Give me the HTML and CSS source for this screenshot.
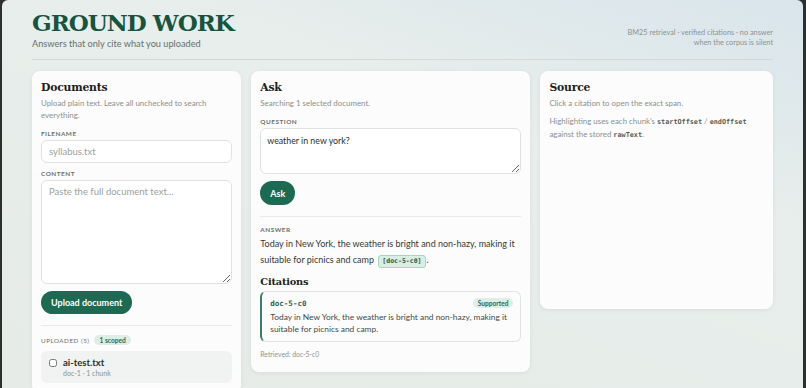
FILE: index.html
```html
<!DOCTYPE html>
<html lang="en">

<head>
    <meta charset="UTF-8">
    <meta name="viewport" content="width=device-width, initial-scale=1.0">
    <title>Ground Work</title>
    <link rel="stylesheet" href="styles.css">
</head>

<body>
    <div class="frame">
        <header class="masthead">
            <div>
                <h1>GROUND WORK</h1>
                <p class="tagline">Answers that only cite what you uploaded</p>
            </div>
            <p class="meta">BM25 retrieval · verified citations · no answer<br>when the corpus is silent</p>
        </header>

        <main class="columns">
            <section class="card">
                <h2>Documents</h2>
                <p class="hint">Upload plain text. Leave all unchecked to search everything.</p>

                <label class="field-label" for="txtName">Filename</label>
                <input type="text" id="txtName" class="field" placeholder="syllabus.txt">

                <label class="field-label" for="txtContent">Content</label>
                <textarea id="txtContent" class="field area-content" placeholder="Paste the full document text..."></textarea>

                <button class="btn">Upload document</button>

                <div class="rule"></div>

                <div class="list-head">
                    <span class="field-label inline">Uploaded (5)</span>
                    <span class="pill">1 scoped</span>
                </div>

                <div class="doc-item">
                    <input type="checkbox" class="doc-check">
                    <div>
                        <div class="doc-name">ai-test.txt</div>
                        <div class="doc-meta">doc-1 · 1 chunk</div>
                    </div>
                </div>
            </section>

            <section class="card card-ask">
                <h2>Ask</h2>
                <p class="hint">Searching 1 selected document.</p>

                <label class="field-label" for="txtQuestion">Question</label>
                <textarea id="txtQuestion" class="field area-question">weather in new york?</textarea>

                <button class="btn btn-small">Ask</button>

                <div class="rule"></div>

                <div class="field-label">Answer</div>
                <p class="answer">Today in New York, the weather is bright and non-hazy, making it suitable for picnics and camp <span class="cite-chip">[doc-5-c0]</span>.</p>

                <h3>Citations</h3>
                <div class="citation">
                    <div class="citation-head">
                        <span class="citation-id">doc-5-c0</span>
                        <span class="pill">Supported</span>
                    </div>
                    <p class="citation-text">Today in New York, the weather is bright and non-hazy, making it suitable for picnics and camp.</p>
                </div>
                <p class="retrieved">Retrieved: doc-5-c0</p>
            </section>

            <section class="card card-source">
                <h2>Source</h2>
                <p class="hint">Click a citation to open the exact span.</p>
                <p class="hint">Highlighting uses each chunk's <code>startOffset</code> / <code>endOffset</code> against the stored <code>rawText</code>.</p>
            </section>
        </main>
    </div>
</body>

</html>
```

FILE: styles.css
```css
html,
body {
    height: 100%;
}

body {
    margin: 0;
    font-family: 'Lato', sans-serif;
    color: #2a2f2d;
    background: #2c2f2e;
    overflow: hidden;
}

.frame {
    height: 100%;
    box-sizing: border-box;
    margin: 0 3px 0 2px;
    padding: 0 30px;
    border-radius: 6px 6px 0 0;
    background: linear-gradient(200deg, #d9e5ec 0%, #e8eeeb 35%, #e6ebe8 100%);
}

.masthead {
    display: flex;
    justify-content: space-between;
    align-items: flex-end;
    padding: 9px 0 10px;
    border-bottom: 1px solid #d3dad6;
}

h1 {
    margin: 0;
    font-family: 'DejaVu Serif', serif;
    font-weight: 700;
    font-size: 23px;
    letter-spacing: -1px;
    line-height: 28px;
    color: #17543d;
}

.tagline {
    margin: 1px 0 0;
    font-size: 9.2px;
    color: #66706b;
}

.meta {
    margin: 0 0 1px;
    text-align: right;
    font-size: 7.3px;
    line-height: 10px;
    color: #8b938f;
}

.columns {
    display: grid;
    grid-template-columns: 0.9fr 1.2fr 1fr;
    gap: 10px;
    align-items: start;
    margin-top: 11px;
}

.card {
    background: #fcfcfc;
    border-radius: 8px;
    padding: 8px 9px 10px;
    box-shadow: 0 1px 4px rgba(40, 60, 50, 0.08);
}

.card-ask {
    padding-bottom: 14px;
}

.card-source {
    min-height: 220px;
}

h2 {
    margin: 0;
    font-family: 'DejaVu Serif', serif;
    font-weight: 700;
    font-size: 10.8px;
    letter-spacing: -0.2px;
    line-height: 18px;
    color: #1d2220;
}

h3 {
    margin: 8px 0 4px;
    font-family: 'DejaVu Serif', serif;
    font-weight: 700;
    font-size: 9.8px;
    letter-spacing: -0.2px;
    color: #1d2220;
}

.hint {
    margin: 0;
    font-size: 7.9px;
    line-height: 12px;
    color: #8a918d;
}

.hint + .hint {
    margin-top: 6px;
}

code {
    font-family: 'DejaVu Sans Mono', monospace;
    font-size: 6.8px;
    font-weight: 700;
    color: #555c58;
}

.field-label {
    display: block;
    margin: 9px 0 3px;
    font-size: 6.4px;
    font-weight: 700;
    letter-spacing: 0.5px;
    text-transform: uppercase;
    color: #6a716d;
}

.field + .field-label {
    margin-top: 7px;
}

.rule + .field-label {
    margin-top: 9px;
}

.field-label.inline {
    display: inline;
    margin: 0;
    font-weight: 400;
    font-size: 6.3px;
}

.field {
    display: block;
    width: 100%;
    box-sizing: border-box;
    border: 1px solid #dde3df;
    border-radius: 6px;
    background: #ffffff;
    font-family: 'Lato', sans-serif;
    font-size: 9.5px;
    color: #2a2f2d;
    padding: 5px 7px;
    outline: none;
}

input.field {
    height: 23px;
}

.field::placeholder {
    color: #9aa19d;
}

.area-content {
    height: 104px;
    resize: vertical;
}

.area-question {
    height: 46px;
    font-size: 8.8px;
    padding: 6px 6px;
}

.btn {
    display: block;
    margin-top: 7px;
    height: 23px;
    padding: 0 10px;
    border: none;
    border-radius: 12px;
    background: #1b6a51;
    color: #ffffff;
    font-family: 'Lato', sans-serif;
    font-size: 9px;
    font-weight: 700;
    cursor: pointer;
}

.btn-small {
    padding: 0 10px;
    height: 24px;
}

.rule {
    height: 1px;
    background: #e8ebe9;
    margin: 11px 0 0;
}

.list-head {
    display: flex;
    align-items: center;
    gap: 5px;
    margin-top: 9px;
}

.pill {
    display: inline-block;
    padding: 1px 5px;
    border-radius: 8px;
    background: #dcefe6;
    color: #2b6a52;
    font-size: 6.6px;
    font-weight: 700;
}

.doc-item {
    display: flex;
    align-items: flex-start;
    gap: 6px;
    margin-top: 6px;
    padding: 6px 9px 6px 8px;
    border-radius: 6px;
    background: #f0f3f1;
}

.doc-check {
    margin: 2px 0 0;
    width: 8px;
    height: 8px;
}

.doc-name {
    font-size: 9.5px;
    font-weight: 700;
    color: #2b302e;
}

.doc-meta {
    font-size: 7px;
    color: #8c938f;
    margin-top: 1px;
}

.answer {
    margin: 0;
    font-size: 9px;
    line-height: 16px;
    color: #343a37;
}

.cite-chip {
    display: inline-block;
    margin: 0 1px 0 2px;
    padding: 0 3px;
    line-height: 11px;
    border: 1px solid #a9d4bf;
    border-radius: 3px;
    background: #d9eee4;
    font-family: 'DejaVu Sans Mono', monospace;
    font-size: 6.5px;
    font-weight: 700;
    color: #245c46;
}

.citation {
    border: 1px solid #dfe4e1;
    border-left: 2px solid #3c7f66;
    border-radius: 6px;
    padding: 6px 7px 6px 8px;
}

.citation-head {
    display: flex;
    justify-content: space-between;
    align-items: center;
}

.citation-id {
    font-family: 'DejaVu Sans Mono', monospace;
    font-size: 7.5px;
    font-weight: 700;
    color: #2b5e4a;
}

.citation-text {
    margin: 4px 0 0;
    font-size: 8.4px;
    line-height: 11.5px;
    color: #434a46;
}

.retrieved {
    margin: 8px 0 0;
    font-size: 6.8px;
    color: #8c938f;
}
```
